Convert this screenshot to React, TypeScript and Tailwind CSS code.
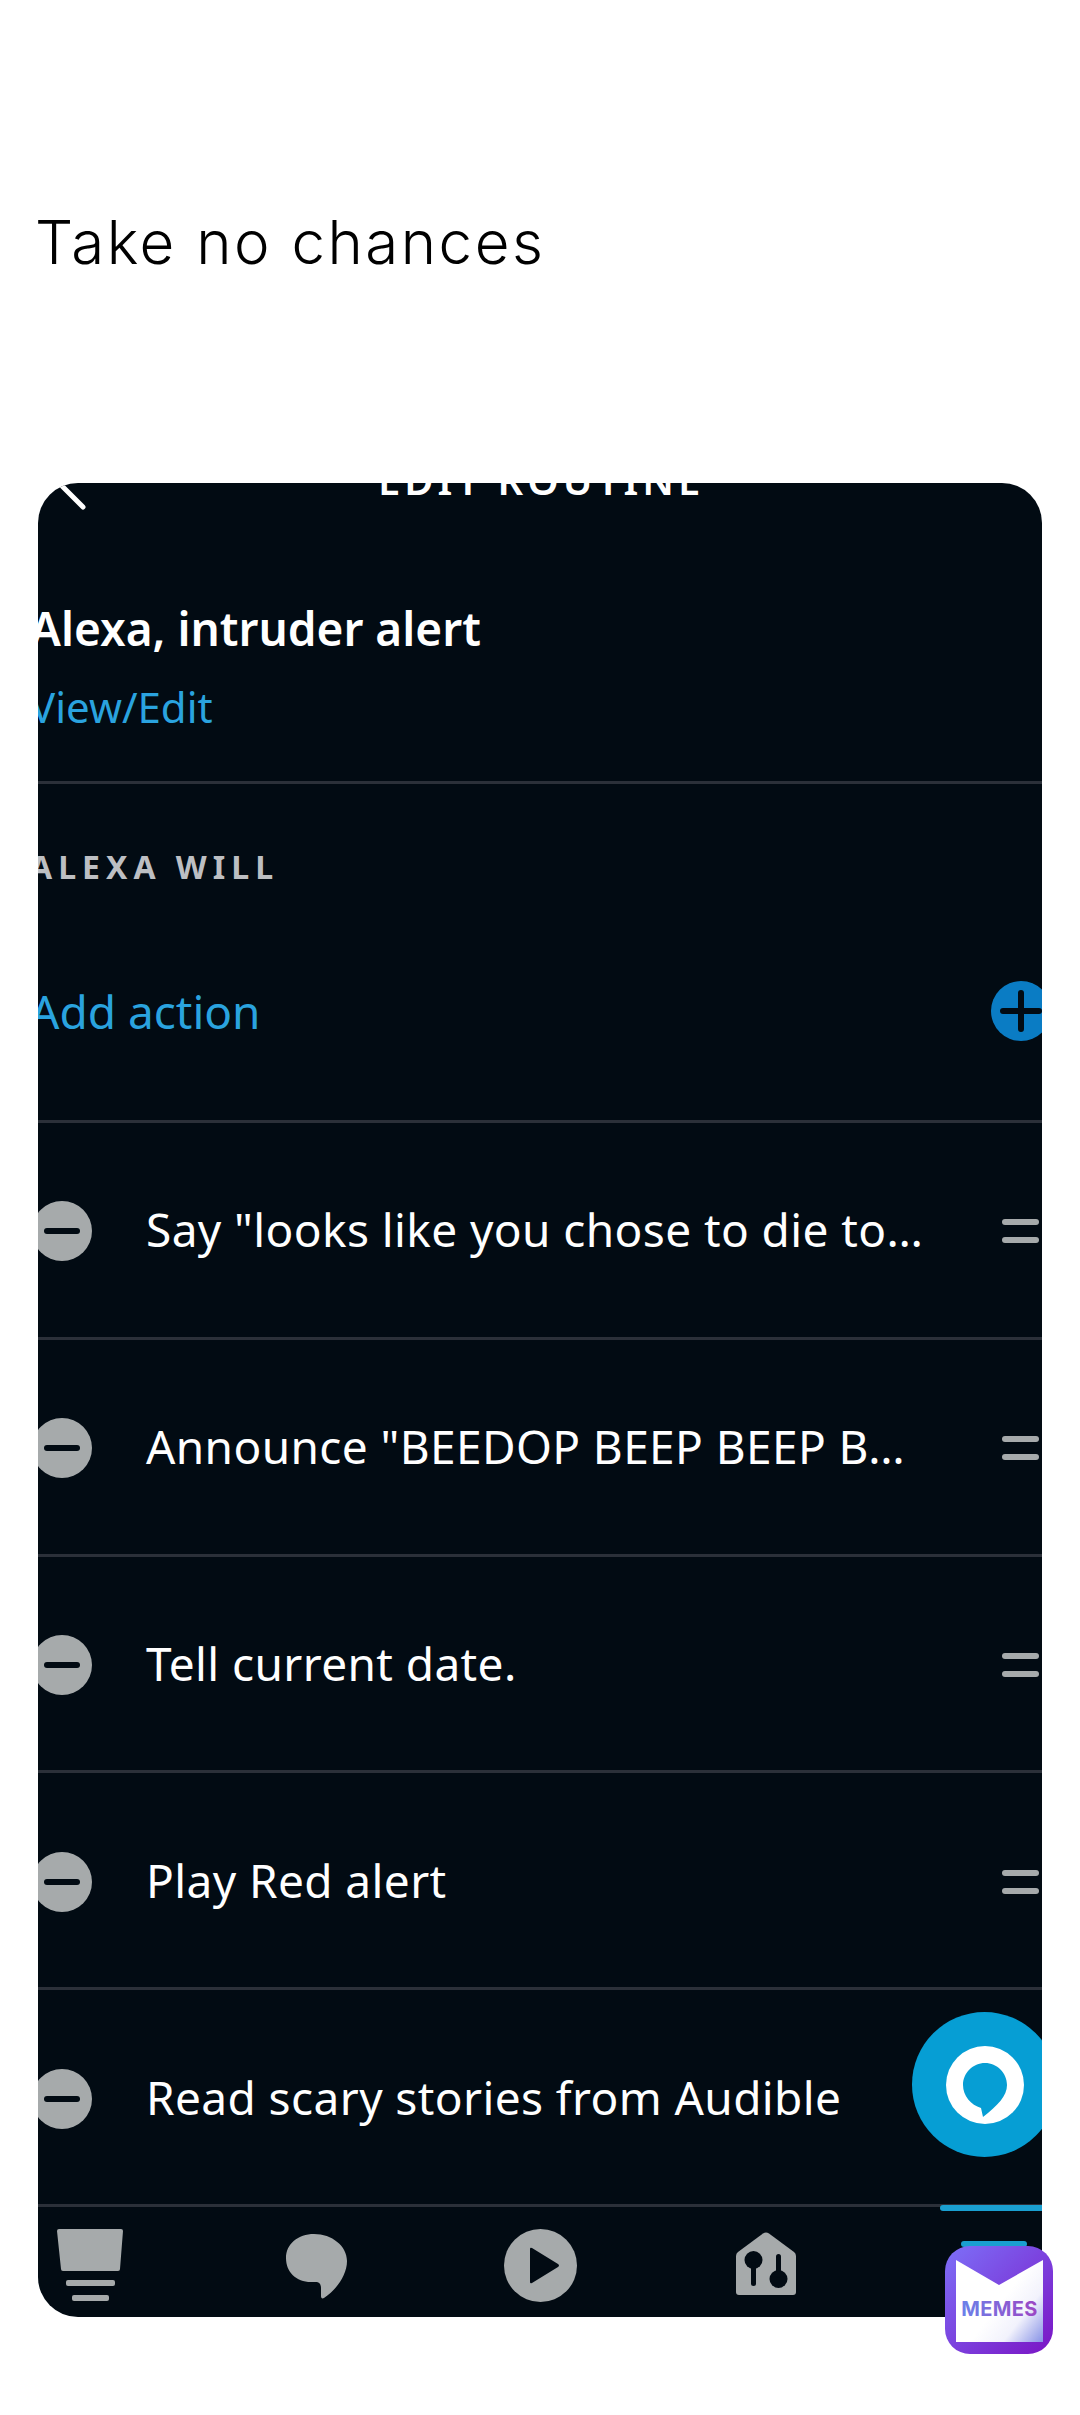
const rows = [
  'Say "looks like you chose to die to…',
  'Announce "BEEDOP BEEP BEEP B…',
  'Tell current date.',
  'Play Red alert',
  'Read scary stories from Audible',
];

function ActionRow({ label, showHandle }: { label: string; showHandle: boolean }) {
  return (
    <div className="flex h-[216.8px] items-center border-b-[3px] border-[#2b3039] pt-[3px] pr-[3px]">
      <div className="-ml-[6px] flex h-[60px] w-[60px] shrink-0 items-center justify-center rounded-full bg-[#a6aaab]">
        <div className="h-[6px] w-[36px] rounded-full bg-[#020b13]" />
      </div>
      <span className="mb-[3px] ml-[54px] whitespace-nowrap text-[46px] tracking-[0.4px] text-white">{label}</span>
      {showHandle && (
        <div className="ml-auto flex flex-col gap-[12px]">
          <div className="h-[6px] w-[37px] rounded-sm bg-[#a6aaab]" />
          <div className="h-[6px] w-[37px] rounded-sm bg-[#a6aaab]" />
        </div>
      )}
    </div>
  );
}

function MemesBadge() {
  return (
    <svg viewBox="0 0 108 108" className="absolute left-[945px] top-[2246px] h-[108px] w-[108px]">
      <defs>
        <linearGradient id="badgeBg" x1="0" y1="0" x2="1" y2="1">
          <stop offset="0" stopColor="#7d70f8" />
          <stop offset="1" stopColor="#7a14c4" />
        </linearGradient>
        <linearGradient id="badgePaper" x1="0.45" y1="0.6" x2="1" y2="1">
          <stop offset="0" stopColor="#ffffff" />
          <stop offset="0.45" stopColor="#f2f2fc" />
          <stop offset="1" stopColor="#8792e6" />
        </linearGradient>
        <linearGradient id="badgeText" x1="0" y1="0" x2="1" y2="0">
          <stop offset="0" stopColor="#6b82ea" />
          <stop offset="1" stopColor="#9c45c4" />
        </linearGradient>
      </defs>
      <rect width="108" height="108" rx="25" fill="url(#badgeBg)" />
      <path d="M11 14 L54 39 L98 14 V96 H11 Z" fill="url(#badgePaper)" />
      <text
        x="54.5"
        y="70"
        textAnchor="middle"
        fontFamily="Inter, sans-serif"
        fontWeight="700"
        fontSize="20"
        letterSpacing="0.4"
        fill="url(#badgeText)"
      >
        MEMES
      </text>
    </svg>
  );
}

export default function App() {
  return (
    <div className="relative h-[2415px] w-[1080px] overflow-hidden bg-white font-['Noto_Sans',sans-serif]">
      <div className="flex h-[483px] flex-col pl-[35px] pt-[203px]">
        <h1 className="font-['Inter',sans-serif] text-[60px] font-light leading-[78px] tracking-[2.5px] text-black">
          Take no chances
        </h1>
      </div>

      <div className="relative ml-[38px] flex h-[1834px] w-[1004px] flex-col overflow-hidden rounded-[40px] bg-[#020b13]">
        {/* top bar, cut off by the screenshot */}
        <div className="relative h-[14px] shrink-0">
          <svg viewBox="0 0 30 30" className="absolute -top-[3px] left-[18px] h-[30px] w-[30px]">
            <path d="M3 3 L27 27" stroke="#fff" strokeWidth="5" strokeLinecap="round" fill="none" />
          </svg>
          <div className="absolute -top-[25px] left-[340px] whitespace-nowrap text-[40px] font-semibold leading-[44px] tracking-[4px] text-white">
            EDIT ROUTINE
          </div>
        </div>

        <div className="-ml-[8px] flex h-[287px] shrink-0 flex-col border-b-[3px] border-[#2b3039] pt-[101px]">
          <div className="text-[46px] font-semibold leading-[60px] text-white">Alexa, intruder alert</div>
          <div className="mt-[22px] text-[42px] leading-[54px] text-[#2aa3df]">View/Edit</div>
        </div>

        <div className="-ml-[8px] flex h-[339px] shrink-0 flex-col border-b-[3px] border-[#2b3039]">
          <div className="mt-[61px] text-[32px] font-bold leading-[44px] tracking-[6px] text-[#bdbfc3]">ALEXA WILL</div>
          <div className="-mr-[9px] mt-[92px] flex items-center justify-between">
            <span className="text-[46px] leading-[60px] text-[#2aa3df]">Add action</span>
            <div className="flex h-[60px] w-[60px] items-center justify-center rounded-full bg-[#0a7cc4]">
              <svg viewBox="0 0 60 60" className="h-[60px] w-[60px]">
                <path d="M12 30 H48 M30 12 V48" stroke="#020b13" strokeWidth="6" strokeLinecap="round" />
              </svg>
            </div>
          </div>
        </div>

        {rows.map((label, i) => (
          <ActionRow key={label} label={label} showHandle={i < 4} />
        ))}

        {/* bottom tabs */}
        <div className="-ml-[61px] grid w-[1130px] shrink-0 grid-cols-5 pt-[22px]">
          <div className="flex justify-center">
            <svg viewBox="0 0 66 72" className="h-[72px] w-[66px]" fill="#a6aaab">
              <path d="M2 0 H64 Q66 0 66 2 L63 40 Q63 42 61 42 H6 Q4 42 4 40 L0 2 Q0 0 2 0 Z" />
              <rect x="9" y="51" width="49" height="6" rx="2" />
              <rect x="15" y="66" width="37" height="6" rx="2" />
            </svg>
          </div>
          <div className="flex justify-center pt-[5px]">
            <svg viewBox="0 0 61 65" className="h-[65px] w-[61px]" fill="#a6aaab">
              <path d="M28 0 C46 0 61 12 61 27 C61 42 49 57 38 64 C36 65 35 64 35 62 L35 54 C35 50 33 48 30 48 L25 48 C10 48 0 38 0 24 C0 10 12 0 28 0 Z" />
            </svg>
          </div>
          <div className="flex justify-center pr-[3px]">
            <svg viewBox="0 0 73 73" className="h-[73px] w-[73px]">
              <circle cx="36.5" cy="36.5" r="36.5" fill="#a6aaab" />
              <path d="M26 20 Q26 18 28 19 L54 35 Q56 36.5 54 38 L28 54 Q26 55 26 53 Z" fill="#020b13" />
            </svg>
          </div>
          <div className="flex justify-center pr-[4px] pt-[3px]">
            <svg viewBox="0 0 60 63" className="h-[63px] w-[60px]">
              <path d="M27 1.5 Q30 -0.5 33 1.5 L58 20 Q60 21.5 60 24 V60 Q60 63 57 63 H3 Q0 63 0 60 V24 Q0 21.5 2 20 Z" fill="#a6aaab" />
              <circle cx="17.5" cy="28" r="9" fill="#020b13" />
              <rect x="15" y="30" width="5" height="24" rx="2.5" fill="#020b13" />
              <circle cx="42.5" cy="47" r="9" fill="#020b13" />
              <rect x="40" y="22" width="5" height="24" rx="2.5" fill="#020b13" />
            </svg>
          </div>
          <div className="flex justify-center pt-[12px]">
            <div className="h-[6px] w-[66px] rounded-sm bg-[#1a9fd0]" />
          </div>
        </div>

        {/* active tab marker */}
        <div className="absolute bottom-[106px] right-0 h-[6px] w-[102px] rounded-l-full bg-[#1a9fd0]" />

        {/* alexa button */}
        <div className="absolute left-[874px] top-[1529px] flex h-[145px] w-[145px] items-center justify-center rounded-full bg-[#069ed4]">
          <svg viewBox="0 0 78 78" className="h-[78px] w-[78px]">
            <circle cx="39" cy="39" r="39" fill="#fff" />
            <path d="M39 17 C51 17 61 27 61 39 C61 50 52 59 37 71 L35 62 C25 59 17 50 17 39 C17 27 27 17 39 17 Z" fill="#069ed4" />
          </svg>
        </div>
      </div>

      <MemesBadge />
    </div>
  );
}
